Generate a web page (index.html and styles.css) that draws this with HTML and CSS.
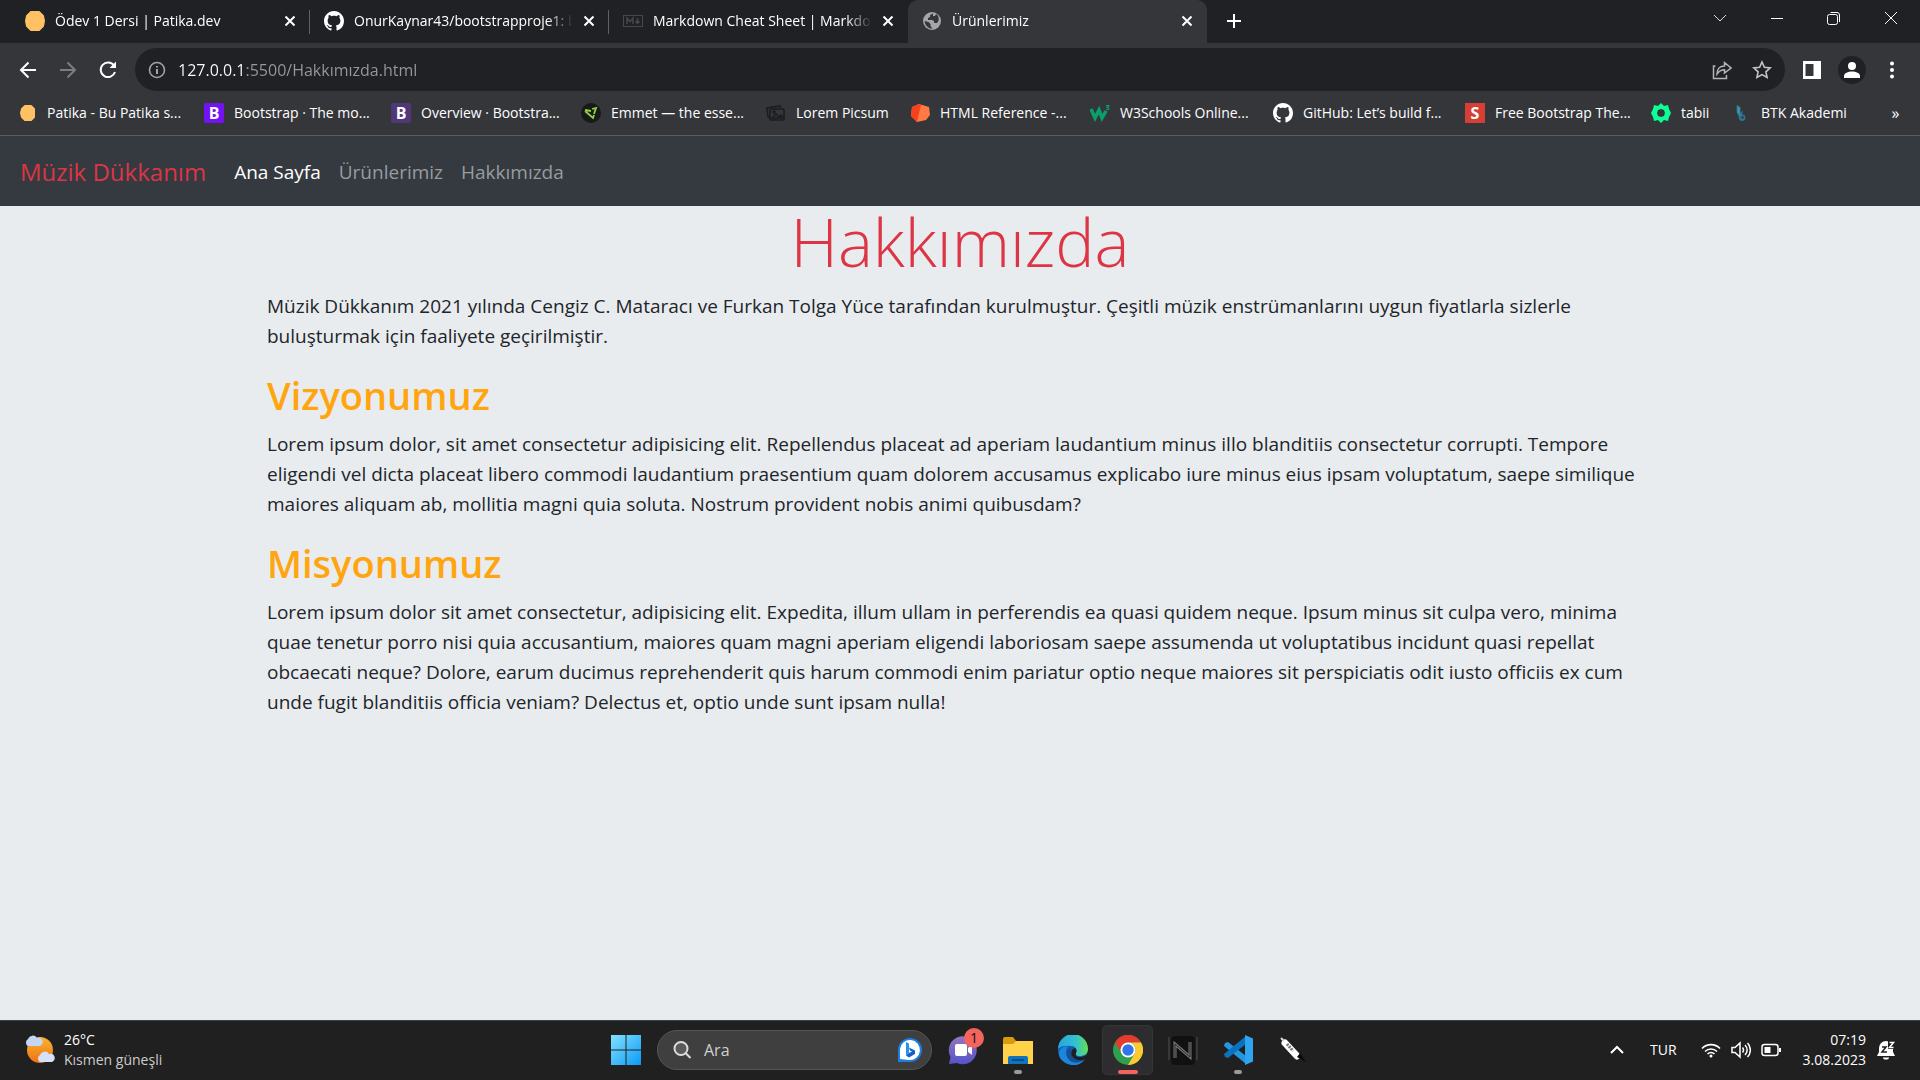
FILE: index.html
```html
<!DOCTYPE html>
<html lang="tr">
<head>
<meta charset="utf-8">
<meta name="viewport" content="width=device-width, initial-scale=1">
<title>Ürünlerimiz</title>
<link rel="stylesheet" href="styles.css">
</head>
<body>
<svg class="defs" aria-hidden="true">
  <symbol id="github" viewBox="0 0 16 16"><path fill="#fff" d="M8 0C3.58 0 0 3.58 0 8c0 3.54 2.29 6.53 5.47 7.59.4.07.55-.17.55-.38 0-.19-.01-.82-.01-1.49-2.01.37-2.53-.49-2.69-.94-.09-.23-.48-.94-.82-1.13-.28-.15-.68-.52-.01-.53.63-.01 1.08.58 1.23.82.72 1.21 1.87.87 2.33.66.07-.52.28-.87.51-1.07-1.78-.2-3.64-.89-3.64-3.95 0-.87.31-1.59.82-2.15-.08-.2-.36-1.02.08-2.12 0 0 .67-.21 2.2.82.64-.18 1.32-.27 2-.27s1.36.09 2 .27c1.53-1.04 2.2-.82 2.2-.82.44 1.1.16 1.92.08 2.12.51.56.82 1.27.82 2.15 0 3.07-1.87 3.75-3.65 3.95.29.25.54.73.54 1.48 0 1.07-.01 1.93-.01 2.2 0 .21.15.46.55.38A8 8 0 0 0 16 8c0-4.42-3.58-8-8-8z"/></symbol>
  <symbol id="cross" viewBox="0 0 12 12"><path d="M1.500 1.500l9 9m0-9l-9 9" stroke="#fff" stroke-width="2" fill="none"/></symbol>
</svg>

<header class="browser">
  <div class="tabstrip">
    <div class="tab">
      <svg class="icon20" viewBox="0 0 20 20"><path d="M6 1h8l4 4 1 5-1 5-4 4H6l-4-4-1-5 1-5z" fill="#ffc163" stroke="#ffc163" stroke-width="2" stroke-linejoin="round"/></svg>
      <span class="tab-title">Ödev 1 Dersi | Patika.dev</span>
      <button class="tab-close" aria-label="Sekmeyi kapat"><svg class="icon12"><use href="#cross"/></svg></button>
    </div>
    <div class="tab">
      <svg class="icon20"><use href="#github"/></svg>
      <span class="tab-title">OnurKaynar43/bootstrapproje1: b</span>
      <button class="tab-close" aria-label="Sekmeyi kapat"><svg class="icon12"><use href="#cross"/></svg></button>
    </div>
    <div class="tab">
      <svg class="icon20" viewBox="0 0 20 20" fill="none" stroke="#46474a"><rect x=".5" y="4.500" width="19" height="11"/><path d="M4 13V7l3 3.500L10 7v6M14.500 7v5m-2-2l2 2.500 2-2.500" stroke-width="1.500"/></svg>
      <span class="tab-title">Markdown Cheat Sheet | Markdo</span>
      <button class="tab-close" aria-label="Sekmeyi kapat"><svg class="icon12"><use href="#cross"/></svg></button>
    </div>
    <div class="tab tab-active">
      <svg class="icon20" viewBox="0 0 20 20"><circle cx="10" cy="10" r="9" fill="#a3a7ab"/><path d="M11 2.500L8 4v2l-2 1v2h4l2 1v2h3l1.500-2c.8-3-.5-6-2.500-7L13 5h-2zM2.500 10l4 1 2 2v2l2 2.500c-4 .5-7.500-3-8-7.500z" fill="#35363a"/></svg>
      <span class="tab-title">Ürünlerimiz</span>
      <button class="tab-close" aria-label="Sekmeyi kapat"><svg class="icon12"><use href="#cross"/></svg></button>
    </div>
    <button class="tab-new" aria-label="Yeni sekme"><svg class="icon16" viewBox="0 0 16 16"><path d="M8 1v14M1 8h14" stroke="#fff" stroke-width="2"/></svg></button>
    <div class="window-controls">
      <button aria-label="Sekme ara"><svg class="icon16" viewBox="0 0 16 16"><path d="M2 5l6 6 6-6" stroke="#ddd" fill="none"/></svg></button>
      <button aria-label="Simge durumuna küçült"><svg class="icon16" viewBox="0 0 16 16"><path d="M2 8.500h12" stroke="#fff"/></svg></button>
      <button aria-label="Önceki boyut"><svg class="icon16" viewBox="0 0 16 16" fill="none" stroke="#fff"><rect x="1.500" y="4.500" width="10" height="10" rx="2"/><path d="M4.500 2.500H11a2.500 2.500 0 0 1 2.500 2.500v7"/></svg></button>
      <button aria-label="Kapat"><svg class="icon16" viewBox="0 0 16 16"><path d="M2 2l12 12m0-12L2 14" stroke="#fff"/></svg></button>
    </div>
  </div>

  <div class="toolbar">
    <button class="tool" aria-label="Geri"><svg class="icon20" viewBox="0 0 20 20" fill="none" stroke="#fff" stroke-width="2"><path d="M18 10H3m7.500-7.500L3 10l7.500 7.500"/></svg></button>
    <button class="tool" aria-label="İleri"><svg class="icon20" viewBox="0 0 20 20" fill="none" stroke="#7c7d80" stroke-width="2"><path d="M2 10h15M9.500 2.500L17 10l-7.500 7.500"/></svg></button>
    <button class="tool" aria-label="Yenile"><svg class="icon20" viewBox="0 0 20 20" fill="none" stroke="#fff" stroke-width="2"><path d="M16 5.500A7.300 7.300 0 1 0 17 12"/><path d="M18 1.500V8h-6.500z" fill="#fff" stroke="none"/></svg></button>
    <div class="omnibox">
      <svg class="icon20" viewBox="0 0 20 20" fill="none" stroke="#a0a4a8" stroke-width="1.600"><circle cx="10" cy="10" r="7.500"/><path d="M10 9v5M10 6v1.600" stroke-width="2"/></svg>
      <input class="url" type="text" aria-label="Adres çubuğu" value="127.0.0.1:5500/Hakkımızda.html">
      <button class="tool" aria-label="Paylaş"><svg class="icon20" viewBox="0 0 20 20" fill="none" stroke="#b3b4b6" stroke-width="1.500"><path d="M3.500 6H1.500v12.500h13V15"/><path d="M5 14c0-5 3-8 7.500-8V2.500L19 8l-6.500 5V9.800C9 9.800 7 11 5 14z"/></svg></button>
      <button class="tool" aria-label="Yer işareti ekle"><svg class="icon20" viewBox="0 0 20 20" fill="none" stroke="#c3c4c6" stroke-width="1.600"><path d="M10 2l2.400 5.300 5.800.6-4.300 3.900 1.200 5.700-5.100-2.900-5.100 2.900 1.200-5.700-4.300-3.900 5.800-.6z"/></svg></button>
    </div>
    <button class="tool" aria-label="Yan panel"><svg class="icon20" viewBox="0 0 20 20"><path fill="#fff" fill-rule="evenodd" d="M1 1h18v18H1zm2.500 3v12h8V4z"/></svg></button>
    <button class="tool" aria-label="Profil"><svg class="icon28" viewBox="0 0 28 28"><circle cx="14" cy="14" r="14" fill="#202124"/><circle cx="14" cy="10" r="4" fill="#fff"/><path d="M6 22v-2c0-3 4-4.500 8-4.500s8 1.500 8 4.500v2z" fill="#fff"/></svg></button>
    <button class="tool" aria-label="Menü"><svg class="icon20" viewBox="0 0 20 20" fill="#fff"><circle cx="10" cy="3.500" r="2"/><circle cx="10" cy="10" r="2"/><circle cx="10" cy="16.500" r="2"/></svg></button>
  </div>

  <nav class="bookmarks" aria-label="Yer işaretleri">
    <a href="#"><svg class="icon20" viewBox="0 0 20 20"><path d="M8 3h6l3 3v8l-3 3H8l-3-3-1-4 1-4z" fill="#ffc163" stroke="#ffc163" stroke-width="2" stroke-linejoin="round"/></svg><span>Patika - Bu Patika s...</span></a>
    <a href="#"><span class="letter letter-violet">B</span><span>Bootstrap · The mo...</span></a>
    <a href="#"><span class="letter letter-plum">B</span><span>Overview · Bootstra...</span></a>
    <a href="#"><svg class="icon20" viewBox="0 0 20 20"><circle cx="10" cy="10" r="10" fill="#17191b"/><path d="M4 8l8 7 1-3M4 7l6 1m1-2l4-1-2 6" fill="none" stroke="#95d13c" stroke-width="1.800"/></svg><span>Emmet — the esse...</span></a>
    <a href="#"><svg class="icon20" viewBox="0 0 20 20" fill="none" stroke="#1c1d1f" stroke-width="1.600"><path d="M4 15l-2-1L1 5l13-2 1 2"/><rect x="4" y="6" width="14" height="11" rx="1"/><path d="M6 15l4-4 3 3 2-2 2 3z"/><circle cx="8" cy="9" r="1"/></svg><span>Lorem Picsum</span></a>
    <a href="#"><svg class="icon20" viewBox="0 0 20 20"><path d="M9 1L2 4 1 13l6 6 9-2 4-5-1-8z" fill="#ff7a45"/><path d="M9 1L2 4 1 13l6 6 2-9 2-8z" fill="#f4431c"/></svg><span>HTML Reference -...</span></a>
    <a href="#"><svg class="icon20" viewBox="0 0 20 20" fill="none" stroke="#0aa06e"><path d="M1 6l4 9 4-8 3 8 4-7" stroke-width="3.500"/><path d="M16 2.500h3l-2 2c3 0 2 3-1 2" stroke-width="1.200"/></svg><span>W3Schools Online...</span></a>
    <a href="#"><svg class="icon20"><use href="#github"/></svg><span>GitHub: Let’s build f...</span></a>
    <a href="#"><span class="letter letter-red">S</span><span>Free Bootstrap The...</span></a>
    <a href="#"><svg class="icon20" viewBox="0 0 20 20"><path fill="#0bff94" fill-rule="evenodd" d="M7 3l3-3 3 3 4-1 1 4 2 4-2 4-1 4-4-1-3 3-3-3-4 1-1-4-2-4 2-4 1-4zM7 7l-1 3 1 3 3 1 3-1 1-3-1-3-3-1z"/></svg><span>tabii</span></a>
    <a href="#"><svg class="icon16" viewBox="0 0 16 20"><path d="M0 0l4 2v9l4-4-1 5a4 4 0 1 1-4 4L0 9z" fill="#2b7792"/><path d="M4 3v9M2 2v8" stroke="#4bb0cf"/><circle cx="7.500" cy="15.500" r="1.500" fill="#35363a"/></svg><span>BTK Akademi</span></a>
    <button class="more" aria-label="Diğer yer işaretleri">»</button>
  </nav>
</header>

<div class="site">
  <nav class="navbar" aria-label="Site">
    <a class="brand" href="#">Müzik Dükkanım</a>
    <a class="nav-link nav-current" href="#">Ana Sayfa</a>
    <a class="nav-link" href="#">Ürünlerimiz</a>
    <a class="nav-link" href="#">Hakkımızda</a>
  </nav>
  <main class="container">
    <h1>Hakkımızda</h1>
    <p>Müzik Dükkanım 2021 yılında Cengiz C. Mataracı ve Furkan Tolga Yüce tarafından kurulmuştur. Çeşitli müzik enstrümanlarını uygun fiyatlarla sizlerle<br> buluşturmak için faaliyete geçirilmiştir.</p>
    <h2>Vizyonumuz</h2>
    <p>Lorem ipsum dolor, sit amet consectetur adipisicing elit. Repellendus placeat ad aperiam laudantium minus illo blanditiis consectetur corrupti. Tempore<br> eligendi vel dicta placeat libero commodi laudantium praesentium quam dolorem accusamus explicabo iure minus eius ipsam voluptatum, saepe similique<br> maiores aliquam ab, mollitia magni quia soluta. Nostrum provident nobis animi quibusdam?</p>
    <h2>Misyonumuz</h2>
    <p>Lorem ipsum dolor sit amet consectetur, adipisicing elit. Expedita, illum ullam in perferendis ea quasi quidem neque. Ipsum minus sit culpa vero, minima<br> quae tenetur porro nisi quia accusantium, maiores quam magni aperiam eligendi laboriosam saepe assumenda ut voluptatibus incidunt quasi repellat<br> obcaecati neque? Dolore, earum ducimus reprehenderit quis harum commodi enim pariatur optio neque maiores sit perspiciatis odit iusto officiis ex cum<br> unde fugit blanditiis officia veniam? Delectus et, optio unde sunt ipsam nulla!</p>
  </main>
</div>

<footer class="taskbar">
  <button class="weather">
    <svg class="icon32" viewBox="0 0 32 32"><defs><linearGradient id="sun" x1="0" y1="0" x2="0" y2="1"><stop offset="0" stop-color="#f9b52c"/><stop offset="1" stop-color="#ee7117"/></linearGradient></defs><circle cx="16" cy="16" r="13" fill="url(#sun)"/><path d="M4 12a4 4 0 0 1 0-7 5 5 0 0 1 9-1 4 4 0 0 1 3 8z" fill="#c5d5f4"/><path d="M16 28a4 4 0 0 1 0-7 5 5 0 0 1 9-1 4 4 0 0 1 3 8z" fill="#d3e0f8"/></svg>
    <span class="lines"><span>26°C</span><span class="dim">Kısmen güneşli</span></span>
  </button>

  <div class="apps">
    <button class="app" aria-label="Başlat"><svg class="icon30" viewBox="0 0 30 30"><defs><linearGradient id="win" x1="0" y1="0" x2="1" y2="1"><stop offset="0" stop-color="#84e0ff"/><stop offset="1" stop-color="#0a9bf5"/></linearGradient></defs><path fill="url(#win)" d="M0 0h14.500v14.500H0zM15.500 0H30v14.500H15.500zM0 15.500h14.500V30H0zM15.500 15.500H30V30H15.500z"/></svg></button>
    <div class="search">
      <svg class="icon20" viewBox="0 0 20 20" fill="none" stroke="#ddd" stroke-width="2"><circle cx="9" cy="8.500" r="6.500" fill="#5a5a5a"/><path d="M13.500 13l5 5"/></svg>
      <input type="text" aria-label="Ara" placeholder="Ara">
      <svg class="icon26" viewBox="0 0 26 26"><path d="M1 25V13A12 12 0 1 1 13 25z" fill="#1b7fe0"/><path d="M3 22V12A10 10 0 1 1 12 23z" fill="#fff"/><path d="M9 5l3 1.500V16l-3 2.500z" fill="#2196e8"/><path d="M9 18.500l3-2.500 3-1.500-2-1-1-3 6 3v3.500L12 20.500z" fill="#1560c8"/></svg>
    </div>
    <button class="app app-chat" aria-label="Sohbet"><svg class="icon30" viewBox="0 0 30 30"><defs><linearGradient id="chat" x1="0" y1="0" x2="0" y2="1"><stop offset="0" stop-color="#9376bd"/><stop offset="1" stop-color="#5553c9"/></linearGradient></defs><path fill="url(#chat)" d="M1 29l1.500-7A14 14 0 1 1 9 28z"/><rect x="7" y="9" width="12" height="12" rx="2" fill="#fff"/><path d="M20 13l4-3v10l-4-3z" fill="#fff"/></svg><span class="badge">1</span></button>
    <button class="app app-open" aria-label="Dosya Gezgini"><svg class="icon30" viewBox="0 0 30 30"><path d="M0 8V4q0-2 2-2h8l3 4v6H0z" fill="#d89b0b"/><path d="M0 9h10l3-3h17v23H0z" fill="#ffd24a"/><path d="M5 29v-6q0-2 2-2h16q2 0 2 2v6z" fill="#1173bd"/><path d="M9 25h12" stroke="#0a4c86" stroke-width="2"/></svg></button>
    <button class="app" aria-label="Edge"><svg class="icon30" viewBox="0 0 30 30"><defs><linearGradient id="edge" x1="0" y1="0" x2="1" y2="0"><stop offset="0" stop-color="#25a5df"/><stop offset=".6" stop-color="#35c1cf"/><stop offset="1" stop-color="#63e04f"/></linearGradient></defs><circle cx="15" cy="15" r="15" fill="#0e62b8"/><path d="M0 14A15 15 0 0 1 30 14c0 5-4 7-8 7-3 0-5-1-4-3 2-4-1-7-5-7C7 10 2 11 0 14z" fill="url(#edge)"/><path d="M1 19c0-5 4-8 9-8-4 6-2 13 4 16 4 2 9 0 13-3-5 7-12 7-17 5S1 23 1 19z" fill="#1b86dc"/><path d="M10 14c-3 6 0 12 6 13 5 1 9-1 12-4-6 2-12 1-14-3-1-2-1-4-1-7z" fill="#174f93"/><path d="M30 15c0 5-4 7-8 7-3 0-5-1-4-4 1-2 0-4-1-5-4 1-5 6-2 9 3 4 9 4 13 2l3-3z" fill="#202021"/></svg></button>
    <button class="app app-open app-focus" aria-label="Chrome"><svg class="icon30" viewBox="0 0 30 30"><circle cx="15" cy="15" r="15" fill="#2f9e4f"/><path d="M2 7.500A15 15 0 0 1 28 7.500H15L9 18.500z" fill="#e33b2e"/><path d="M28 7.500A15 15 0 0 1 15 30l6.500-11.300A7.500 7.500 0 0 0 15 7.500z" fill="#fdc930"/><circle cx="15" cy="15" r="7.500" fill="#fff"/><circle cx="15" cy="15" r="5.700" fill="#2f74e8"/></svg></button>
    <button class="app" aria-label="Nitro"><svg class="icon30" viewBox="0 0 30 30"><rect x="3" y="1" width="24" height="29" rx="4" fill="#111"/><path d="M1 2v23M29 2v23" stroke="#383838" stroke-width="2"/><path d="M7 23V9l15 13V7" fill="none" stroke="#777" stroke-width="3"/><path d="M7 23V9l15 13V7" fill="none" stroke="#262626"/></svg></button>
    <button class="app app-open" aria-label="Visual Studio Code"><svg class="icon30" viewBox="0 0 30 30"><path d="M2 8l3-1 18 14v8L1 11z" fill="#2097e0"/><path d="M2 22l3 1L23 9V1L1 19z" fill="#0b72bf"/><path d="M22 0l8 3.500v23L22 30z" fill="#2fa5ef"/></svg></button>
    <button class="app" aria-label="Kalem"><svg class="icon30" viewBox="0 0 30 30"><path d="M7 8l12 13" stroke="#fff" stroke-width="7" stroke-linecap="round"/><path d="M3 3l3 3" stroke="#ddd" stroke-width="2"/><path d="M22 18l6 9-9-5z" fill="#0a0a0a"/><path d="M9 9l6 7" stroke="#777" stroke-width="3" stroke-dasharray="2 1"/></svg></button>
  </div>

  <div class="tray">
    <button aria-label="Gizli simgeler"><svg class="icon16" viewBox="0 0 16 16"><path d="M2 11l6-6 6 6" stroke="#fff" stroke-width="2" fill="none"/></svg></button>
    <button class="lang">TUR</button>
    <button class="status" aria-label="Ağ, ses, pil">
      <svg class="icon20" viewBox="0 0 20 20" fill="none" stroke="#fff" stroke-width="1.600"><path d="M1 8.500a12.500 12.500 0 0 1 18 0M4 11.500a8.500 8.500 0 0 1 12 0M6.500 14a5 5 0 0 1 7 0"/><circle cx="10" cy="16" r="1.500" fill="#fff" stroke="none"/></svg>
      <svg class="icon20" viewBox="0 0 20 20" fill="none" stroke="#fff" stroke-width="1.500"><path d="M1 7.500h3l5-4.500v14l-5-4.500H1zM11.500 7.500a4 4 0 0 1 0 5M14 5a7 7 0 0 1 0 10M16.500 3a10 10 0 0 1 0 14"/></svg>
      <svg class="icon20" viewBox="0 0 20 20" fill="none" stroke="#fff" stroke-width="1.500"><rect x="1" y="4.500" width="16" height="11" rx="2.500"/><rect x="3.500" y="7" width="6" height="6" fill="#fff" stroke="none"/><path d="M19 8v4" stroke-width="2"/></svg>
    </button>
    <button class="clock lines"><span>07:19</span><span>3.08.2023</span></button>
    <button aria-label="Bildirimler"><svg class="icon20" viewBox="0 0 20 20"><path d="M1 16l2-4V8a7 7 0 0 1 14 0v4l2 4z" fill="#fff"/><path d="M7 17.500a3 2 0 0 0 6 0z" fill="#fff"/><path d="M6 7h4l-4 5h5" fill="none" stroke="#202021" stroke-width="1.500"/><path d="M12 1h7l-1 8h-6z" fill="#202021"/><path d="M13.500 2.500h4l-4 5h4" fill="none" stroke="#fff" stroke-width="1.500"/></svg></button>
  </div>
</footer>
</body>
</html>
```
FILE: styles.css
```css
* { box-sizing: border-box; }

body {
  margin: 0;
  min-height: 100vh;
  display: flex;
  flex-direction: column;
  font: 14px/20px "Open Sans", "Noto Sans", sans-serif;
  color: #fff;
  background: #e9ecef;
}

a { color: inherit; text-decoration: none; }

button {
  margin: 0;
  padding: 0;
  border: 0;
  background: none;
  color: inherit;
  font: inherit;
  display: flex;
  align-items: center;
  justify-content: center;
}

input {
  min-width: 0;
  flex: 1;
  padding: 0;
  border: 0;
  outline: 0;
  background: none;
  color: inherit;
  font: inherit;
}

svg { flex: none; display: block; }
.defs { position: absolute; width: 0; height: 0; }
.icon12 { width: 12px; height: 12px; }
.icon16 { width: 16px; height: 16px; }
.icon20 { width: 20px; height: 20px; }
.icon26 { width: 26px; height: 26px; }
.icon28 { width: 28px; height: 28px; }
.icon30 { width: 30px; height: 30px; }
.icon32 { width: 32px; height: 32px; }

/* Browser frame */
.browser { background: #35363a; border-bottom: 1px solid #5a5d61; }

.tabstrip {
  display: flex;
  height: 43px;
  padding-left: 11px;
  background: #202124;
}

.tab {
  flex: 0 1 299px;
  min-width: 0;
  display: flex;
  align-items: center;
  gap: 10px;
  padding: 0 14px 2px;
  background: linear-gradient(#5f6166, #5f6166) right center / 1px 24px no-repeat;
}

.tab:has(+ .tab-active) { background: none; }
.tab-active { background: #35363a; border-radius: 10px 10px 0 0; }

.tab-title {
  flex: 1;
  overflow: hidden;
  white-space: nowrap;
  -webkit-mask-image: linear-gradient(to right, #000 88%, transparent);
  mask-image: linear-gradient(to right, #000 88%, transparent);
}

.tab-new { width: 54px; padding-bottom: 1px; }
.window-controls { display: flex; margin-left: auto; padding: 0 1px 7px 0; }
.window-controls button { width: 57px; }

.toolbar { display: flex; align-items: center; padding: 5px 8px 0; }
.tool { width: 40px; height: 40px; }

.omnibox {
  flex: 1;
  min-width: 0;
  display: flex;
  align-items: center;
  height: 43px;
  margin: 0 7px;
  padding: 0 3px 0 12px;
  border-radius: 22px;
  background: #202124;
}

.url {
  margin-left: 11px;
  font-size: 16px;
  background: linear-gradient(to right, #fff 67px, #96999d 67px);
  -webkit-background-clip: text;
  background-clip: text;
  -webkit-text-fill-color: transparent;
}

.bookmarks {
  display: grid;
  grid-template-columns: 187fr 187fr 190fr 185fr 144fr 180fr 183fr 192fr 186fr 84fr 136fr 49fr;
  align-items: center;
  height: 44px;
  padding-left: 17px;
}

.bookmarks a { display: flex; align-items: center; gap: 10px; white-space: nowrap; }
.more { font-size: 16px; }

.letter {
  width: 20px;
  height: 20px;
  border-radius: 2px;
  font-weight: 700;
  font-size: 16px;
  text-align: center;
}

.letter-violet { background: #7312f5; }
.letter-plum { background: #503778; }
.letter-red { background: #d63f35; border-radius: 0; }

/* Site */
.site { flex: 1; background: #e9ecef; color: #212529; font-size: 19px; line-height: 30px; }

.navbar {
  display: flex;
  align-items: center;
  min-height: 70px;
  padding: 11px 20px 9px;
  background: #343a40;
}

.brand { margin-right: 19px; color: #dc3545; font-size: 24px; }
.nav-link { padding: 10px 9px; color: #999c9f; }
.nav-current { color: #fff; }

.container { max-width: 1426px; margin: 0 auto; padding: 0 20px; }

.container h1 {
  margin: 0 0 14px;
  color: #dc3545;
  font-size: 66px;
  line-height: 71px;
  font-weight: 300;
  text-align: center;
}

.container h2 {
  margin: 0 0 10px;
  color: #ffa510;
  font-size: 38px;
  line-height: 48px;
  font-weight: 600;
}

.container p { margin: 0 0 20px; }

/* Taskbar */
.taskbar {
  display: grid;
  grid-template-columns: 1fr auto 1fr;
  height: 60px;
  padding-bottom: 2px;
  background: #202021;
  border-top: 1px solid #3c4043;
}

.weather { justify-self: start; gap: 8px; padding-left: 24px; }
.lines { display: flex; flex-direction: column; align-items: flex-start; justify-content: center; }
.dim { color: #ccc; }

.apps { display: flex; align-items: center; padding-right: 2px; }
.app { position: relative; width: 55px; height: 50px; }

.search {
  width: 275px;
  height: 40px;
  display: flex;
  align-items: center;
  gap: 12px;
  margin: 0 3px 0 4px;
  padding: 0 8px 0 14px;
  border: 1px solid #555;
  border-radius: 20px;
  background: #3f3f3f;
}

.search input { font-size: 16px; }
.search input::placeholder { color: #d0d0d0; opacity: 1; }

.badge {
  position: absolute;
  top: 3px;
  right: 6px;
  width: 20px;
  height: 20px;
  border-radius: 50%;
  background: #f4645f;
  color: #111;
}

.app-open::after {
  content: "";
  position: absolute;
  bottom: 1px;
  left: 50%;
  width: 8px;
  height: 4px;
  margin-left: -4px;
  border-radius: 2px;
  background: #999;
}

.app-focus { width: 51px; margin: 0 2px; border: 1px solid #353537; border-radius: 5px; background: #2d2d2f; }
.app-focus::after { bottom: 0; width: 20px; margin-left: -10px; background: #f4645f; }

.tray { display: flex; align-items: center; justify-content: flex-end; padding-right: 24px; }
.lang { margin: 0 24px 0 25px; }
.status { gap: 10px; }
.clock { align-items: flex-end; margin: 0 10px 0 22px; }
```
